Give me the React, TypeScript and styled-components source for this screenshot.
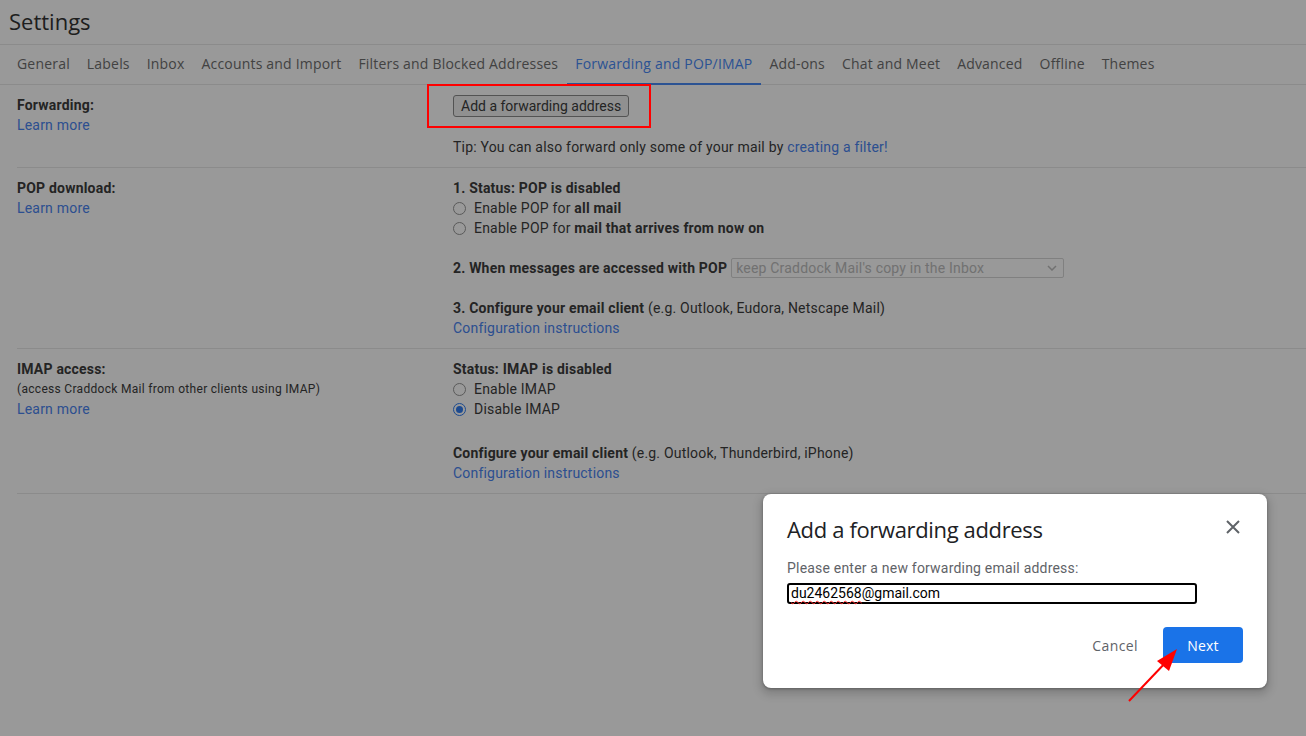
import React from "react";
import styled, { createGlobalStyle } from "styled-components";

const GlobalStyle = createGlobalStyle`
  html, body { margin: 0; padding: 0; background: #fff; }
  body {
    font-family: Roboto, "Liberation Sans", Arial, sans-serif;
    font-size: 14px;
    letter-spacing: 0.2px;
    color: #3c3c3c;
    overflow: hidden;
  }
  * { box-sizing: border-box; }
`;

const Page = styled.div`
  width: 1306px;
  height: 736px;
  position: relative;
  overflow: hidden;
  background: #fff;
`;

const Header = styled.header`
  height: 45px;
  border-bottom: 1px solid #e8e8e8;
  padding: 0 9px 3px;
  display: flex;
  align-items: center;
`;

const Title = styled.h1`
  margin: 0;
  font-family: "Open Sans", Roboto, sans-serif;
  font-weight: 400;
  font-size: 22px;
  letter-spacing: 0;
  color: #333;
`;

const TabBar = styled.nav`
  height: 40px;
  border-bottom: 1px solid #e8e8e8;
  padding-left: 8.5px;
  display: flex;
`;

const Tab = styled.div<{ $active?: boolean }>`
  height: 40px;
  margin-bottom: -1px;
  padding: 0 8.5px 1px;
  display: flex;
  align-items: center;
  font-family: "Open Sans", Roboto, sans-serif;
  font-size: 14px;
  letter-spacing: 0.19px;
  color: ${(p) => (p.$active ? "#4a8af5" : "#6e6e6e")};
  border-bottom: 2px solid ${(p) => (p.$active ? "#4a8af5" : "transparent")};
  white-space: nowrap;
`;

const Content = styled.main`
  padding-left: 17px;
`;

const Section = styled.section`
  display: grid;
  grid-template-columns: 436px 1fr;
  padding: 10px 0;
  border-bottom: 1px solid #e8e8e8;
  line-height: 20px;
`;

const Column = styled.div`
  display: flex;
  flex-direction: column;
`;

const Label = styled.div`
  font-weight: 700;
  color: #3c3c3c;
`;

const Note = styled.div`
  font-size: 12px;
  letter-spacing: 0.3px;
`;

const Link = styled.a`
  color: #4a84f0;
  text-decoration: none;
  cursor: pointer;
`;

const Line = styled.div`
  height: 20px;
  display: flex;
  align-items: center;
  white-space: nowrap;
`;

const Spacer = styled.div<{ $h: number }>`
  height: ${(p) => p.$h}px;
`;

const Strong = styled.b`
  font-weight: 700;
`;

const ButtonWrap = styled.div`
  position: relative;
  align-self: flex-start;
`;

const OldButton = styled.button`
  height: 22px;
  padding: 0 7px;
  border: 1px solid #8a8a8a;
  border-radius: 3px;
  background: #f0f0f0;
  font-family: Roboto, sans-serif;
  font-size: 14px;
  letter-spacing: 0;
  color: #3c3c3c;
`;

const Highlight = styled.div`
  position: absolute;
  left: -26px;
  right: -22px;
  top: -11px;
  bottom: -11px;
  border: 2px solid #ff0000;
  z-index: 20;
  pointer-events: none;
`;

const Tip = styled.div`
  margin-top: 20px;
`;

const RadioRow = styled.label`
  height: 20px;
  display: flex;
  align-items: center;
  gap: 8px;
`;

const Radio = styled.span<{ $checked?: boolean }>`
  width: 13px;
  height: 13px;
  border-radius: 50%;
  border: 1px solid ${(p) => (p.$checked ? "#2f7cf0" : "#969696")};
  background: #fff;
  display: flex;
  align-items: center;
  justify-content: center;
  &::after {
    content: "";
    width: 7px;
    height: 7px;
    border-radius: 50%;
    background: ${(p) => (p.$checked ? "#2f7cf0" : "transparent")};
  }
`;

const Select = styled.div`
  margin-left: 4px;
  width: 333px;
  height: 20px;
  border: 1px solid #d6d6d6;
  border-radius: 2px;
  padding: 0 6px 0 4px;
  display: flex;
  align-items: center;
  justify-content: space-between;
  color: #bdbdbd;
`;

const Overlay = styled.div`
  position: absolute;
  inset: 0;
  background: rgba(0, 0, 0, 0.4);
  z-index: 10;
`;

const Dialog = styled.div`
  position: absolute;
  left: 763px;
  top: 494px;
  width: 504px;
  height: 194px;
  background: #fff;
  border-radius: 8px;
  box-shadow: 0 4px 8px 3px rgba(0, 0, 0, 0.15), 0 1px 3px rgba(0, 0, 0, 0.3);
  padding: 21px 24px 25px;
  display: flex;
  flex-direction: column;
  z-index: 30;
`;

const DialogHeader = styled.div`
  height: 29px;
  display: flex;
  justify-content: space-between;
  align-items: flex-start;
`;

const DialogTitle = styled.h2`
  margin: 0;
  font-family: "Open Sans", Roboto, sans-serif;
  font-weight: 400;
  font-size: 22px;
  letter-spacing: -0.35px;
  line-height: 28px;
  color: #202124;
`;

const CloseButton = styled.button`
  margin-top: 2px;
  width: 20px;
  height: 20px;
  padding: 0;
  border: 0;
  background: transparent;
  display: flex;
  align-items: center;
  justify-content: center;
`;

const Prompt = styled.div`
  margin-top: 14px;
  line-height: 20px;
  color: #5f6368;
`;

const Field = styled.div`
  margin-top: 5px;
  width: 410px;
  height: 21px;
  border: 2px solid #000;
  border-radius: 3px;
  padding: 0 2px;
  font-size: 14px;
  letter-spacing: 0;
  line-height: 17px;
  color: #000;
`;

const Misspelled = styled.span`
  text-decoration-line: underline;
  text-decoration-style: wavy;
  text-decoration-color: #ff2a2a;
  text-decoration-thickness: 1px;
  text-underline-offset: 2px;
`;

const Actions = styled.div`
  margin-top: auto;
  display: flex;
  justify-content: flex-end;
`;

const TextButton = styled.button`
  height: 36px;
  padding: 0 25px 0 22px;
  border: 0;
  background: transparent;
  font-family: "Open Sans", Roboto, sans-serif;
  font-weight: 500;
  font-size: 14px;
  letter-spacing: 0.4px;
  color: #5f6368;
`;

const PrimaryButton = styled.button`
  width: 80px;
  height: 36px;
  border: 0;
  border-radius: 4px;
  background: #1a73e8;
  font-family: "Open Sans", Roboto, sans-serif;
  font-weight: 500;
  font-size: 14px;
  letter-spacing: 0.25px;
  color: #fff;
`;

const ArrowSvg = styled.svg`
  position: absolute;
  left: 1120px;
  top: 640px;
  z-index: 40;
  overflow: visible;
`;

const tabs = [
  "General",
  "Labels",
  "Inbox",
  "Accounts and Import",
  "Filters and Blocked Addresses",
  "Forwarding and POP/IMAP",
  "Add-ons",
  "Chat and Meet",
  "Advanced",
  "Offline",
  "Themes",
];

export default function App() {
  return (
    <Page>
      <GlobalStyle />
      <Header>
        <Title>Settings</Title>
      </Header>
      <TabBar>
        {tabs.map((t) => (
          <Tab key={t} $active={t === "Forwarding and POP/IMAP"}>
            {t}
          </Tab>
        ))}
      </TabBar>
      <Content>
        <Section>
          <Column>
            <Label>Forwarding:</Label>
            <Link>Learn more</Link>
          </Column>
          <Column>
            <ButtonWrap>
              <OldButton>Add a forwarding address</OldButton>
              <Highlight />
            </ButtonWrap>
            <Tip>
              Tip: You can also forward only some of your mail by <Link>creating a filter!</Link>
            </Tip>
          </Column>
        </Section>

        <Section>
          <Column>
            <Label>POP download:</Label>
            <Link>Learn more</Link>
          </Column>
          <Column>
            <Line>
              <Strong>1. Status: POP is disabled</Strong>
            </Line>
            <RadioRow>
              <Radio />
              <span>
                Enable POP for <Strong>all mail</Strong>
              </span>
            </RadioRow>
            <RadioRow>
              <Radio />
              <span>
                Enable POP for <Strong>mail that arrives from now on</Strong>
              </span>
            </RadioRow>
            <Spacer $h={20} />
            <Line>
              <Strong>2. When messages are accessed with POP</Strong>
              <Select>
                <span>keep Craddock Mail's copy in the Inbox</span>
                <svg width="10" height="6" viewBox="0 0 10 6">
                  <path d="M1 1l4 4 4-4" fill="none" stroke="#bdbdbd" strokeWidth="1.5" />
                </svg>
              </Select>
            </Line>
            <Spacer $h={20} />
            <Line>
              <Strong>3. Configure your email client</Strong>&nbsp;(e.g. Outlook, Eudora, Netscape Mail)
            </Line>
            <Line>
              <Link>Configuration instructions</Link>
            </Line>
          </Column>
        </Section>

        <Section>
          <Column>
            <Label>IMAP access:</Label>
            <Note>(access Craddock Mail from other clients using IMAP)</Note>
            <Link>Learn more</Link>
          </Column>
          <Column>
            <Line>
              <Strong>Status: IMAP is disabled</Strong>
            </Line>
            <RadioRow>
              <Radio />
              <span>Enable IMAP</span>
            </RadioRow>
            <RadioRow>
              <Radio $checked />
              <span>Disable IMAP</span>
            </RadioRow>
            <Spacer $h={24} />
            <Line>
              <Strong>Configure your email client</Strong>&nbsp;(e.g. Outlook, Thunderbird, iPhone)
            </Line>
            <Line>
              <Link>Configuration instructions</Link>
            </Line>
          </Column>
        </Section>
      </Content>

      <Overlay />

      <Dialog role="dialog">
        <DialogHeader>
          <DialogTitle>Add a forwarding address</DialogTitle>
          <CloseButton aria-label="Close">
            <svg width="14" height="14" viewBox="0 0 14 14">
              <path d="M1 1l12 12M13 1L1 13" stroke="#5f6368" strokeWidth="2" />
            </svg>
          </CloseButton>
        </DialogHeader>
        <Prompt>Please enter a new forwarding email address:</Prompt>
        <Field>
          <Misspelled>du2462568</Misspelled>@gmail.com
        </Field>
        <Actions>
          <TextButton>Cancel</TextButton>
          <PrimaryButton>Next</PrimaryButton>
        </Actions>
      </Dialog>

      <ArrowSvg width="70" height="70" viewBox="0 0 70 70">
        <line x1="9" y1="61" x2="48" y2="20" stroke="#ff0000" strokeWidth="2" />
        <polygon points="57,9 37,21 49,31" fill="#ff0000" />
      </ArrowSvg>
    </Page>
  );
}
